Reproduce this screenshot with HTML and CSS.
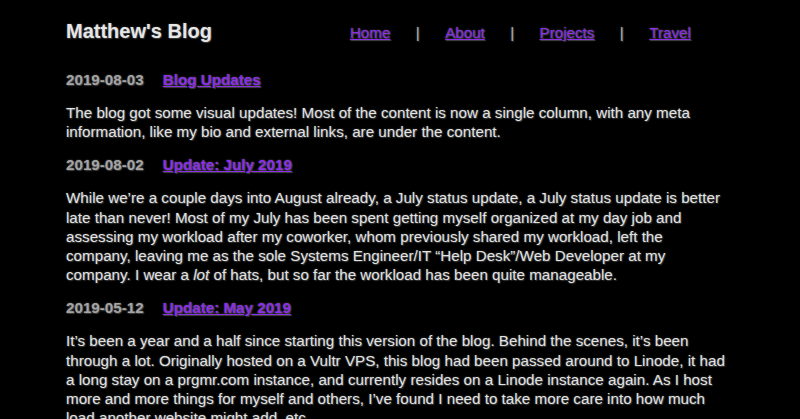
FILE: index.html
```html
<!DOCTYPE html>
<html lang="en">
<head>
<meta charset="utf-8">
<title>Matthew's Blog</title>
<link rel="stylesheet" href="styles.css">
</head>
<body>
<div class="page">
  <header class="site-header">
    <h1 class="site-title">Matthew's Blog</h1>
    <nav class="site-nav">
      <a href="#">Home</a>
      <span class="sep">|</span>
      <a href="#">About</a>
      <span class="sep">|</span>
      <a href="#">Projects</a>
      <span class="sep">|</span>
      <a href="#">Travel</a>
    </nav>
  </header>
  <main class="posts">
    <article class="post">
      <h2 class="post-head"><span class="post-date">2019-08-03</span><a href="#">Blog Updates</a></h2>
      <p>The blog got some visual updates! Most of the content is now a single column, with any meta information, like my bio and external links, are under the content.</p>
    </article>
    <article class="post">
      <h2 class="post-head"><span class="post-date">2019-08-02</span><a href="#">Update: July 2019</a></h2>
      <p>While we’re a couple days into August already, a July status update, a July status update is better late than never! Most of my July has been spent getting myself organized at my day job and assessing my workload after my coworker, whom previously shared my workload, left the company, leaving me as the sole Systems Engineer/IT “Help Desk”/Web Developer at my company. I wear a <em>lot</em> of hats, but so far the workload has been quite manageable.</p>
    </article>
    <article class="post">
      <h2 class="post-head"><span class="post-date">2019-05-12</span><a href="#">Update: May 2019</a></h2>
      <p>It’s been a year and a half since starting this version of the blog. Behind the scenes, it’s been through a lot. Originally hosted on a Vultr VPS, this blog had been passed around to Linode, it had a long stay on a prgmr.com instance, and currently resides on a Linode instance again. As I host more and more things for myself and others, I’ve found I need to take more care into how much load another website might add, etc.</p>
    </article>
  </main>
</div>
</body>
</html>
```

FILE: styles.css
```css
html, body {
  margin: 0;
  padding: 0;
  background: #000;
}
body {
  font-family: "Liberation Sans", Arial, Helvetica, sans-serif;
  font-size: 15.2px;
  line-height: 19.2px;
  color: #e2e2e2;
  text-shadow: 0 0 2px #555, 1px 1px 1px #333;
}
.page {
  padding: 0 66px;
}
.site-header {
  display: flex;
  align-items: baseline;
  padding-top: 18px;
}
.site-title {
  margin: 0;
  font-size: 20px;
  line-height: 26px;
  font-weight: bold;
  color: #e6e6e6;
}
.site-nav {
  display: flex;
  align-items: baseline;
  margin-left: 138px;
}
.site-nav a {
  color: #8c2fe6;
}
.sep {
  color: #b0b0b0;
  padding: 0 25.4px;
}
.posts {
  padding-top: 26px;
  max-width: 662px;
}
.post-head {
  margin: 0;
  font-size: 15.2px;
  line-height: 19px;
  font-weight: bold;
}
.post-date {
  color: #a4a4a4;
  margin-right: 19px;
}
.post-head a {
  color: #8c2fe6;
}
.post p {
  margin: 14px 0;
}
```
